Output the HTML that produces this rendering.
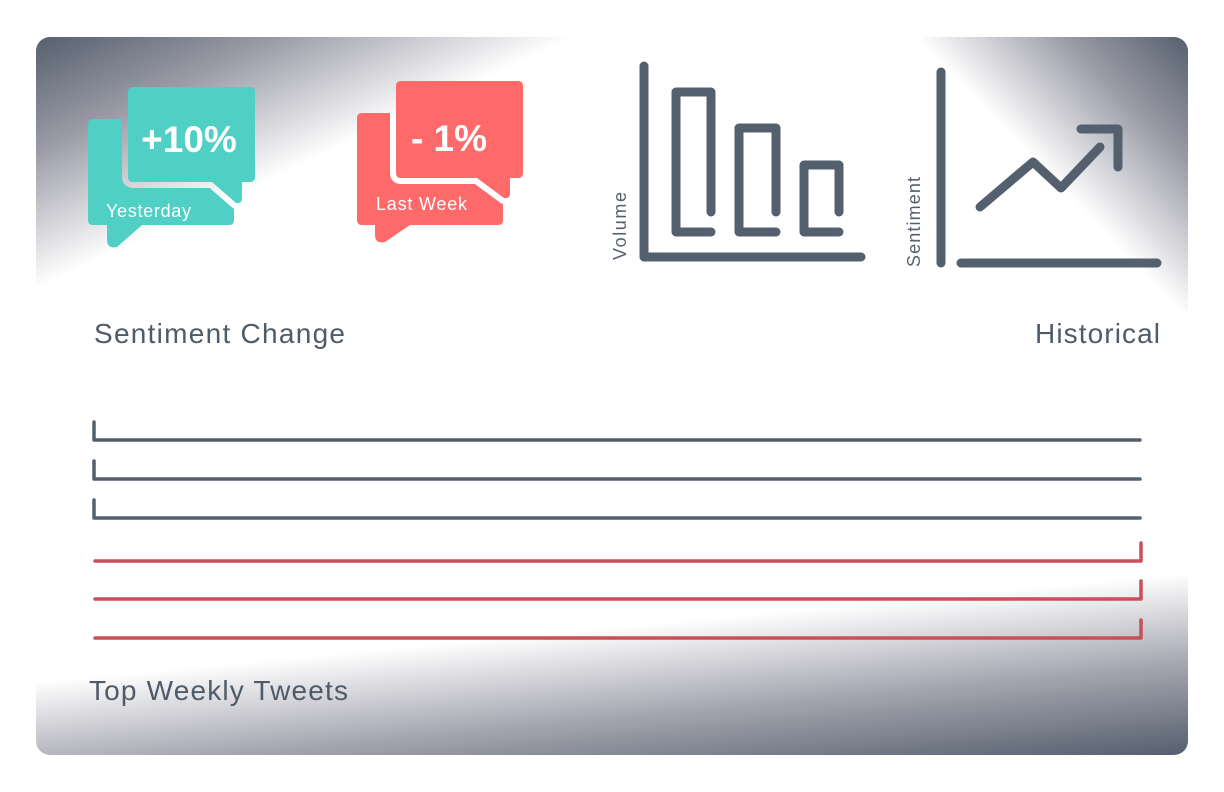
<!DOCTYPE html>
<html><head><meta charset="utf-8"><style>
html,body{margin:0;padding:0;background:#fff;width:1224px;height:792px;overflow:hidden}
svg{display:block}
text{font-family:"Liberation Sans",sans-serif}
</style></head><body>
<svg width="1224" height="792" viewBox="0 0 1224 792" xmlns="http://www.w3.org/2000/svg">
<defs>
<clipPath id="card"><rect x="36" y="37" width="1152" height="718" rx="14"/></clipPath>
<linearGradient id="gtl" gradientUnits="userSpaceOnUse" x1="36" y1="37" x2="133" y2="244">
<stop offset="0" stop-color="#56606e"/><stop offset="0.45" stop-color="#9a9ba6"/><stop offset="1" stop-color="#ffffff"/></linearGradient>
<linearGradient id="gtr" gradientUnits="userSpaceOnUse" x1="1188" y1="37" x2="1047" y2="173">
<stop offset="0" stop-color="#56606e"/><stop offset="0.45" stop-color="#9a9ba6"/><stop offset="1" stop-color="#ffffff"/></linearGradient>
<linearGradient id="gb" gradientUnits="userSpaceOnUse" x1="1188" y1="573" x2="1205" y2="753">
<stop offset="0" stop-color="#ffffff"/><stop offset="0.5" stop-color="#a4a5af"/><stop offset="1" stop-color="#56606e"/></linearGradient>
<mask id="m1" maskUnits="userSpaceOnUse" x="0" y="0" width="1224" height="792">
<rect width="1224" height="792" fill="#fff"/>
<path d="M133,87H250q5,0 5,5V177q0,5 -5,5H242V198q0,6 -6,5L212,182H133q-5,0 -5,-5V92q0,-5 5,-5Z" fill="#000" stroke="#000" stroke-width="12" stroke-linejoin="round"/>
</mask>
<mask id="m2" maskUnits="userSpaceOnUse" x="0" y="0" width="1224" height="792">
<rect width="1224" height="792" fill="#fff"/>
<path d="M401,81H518q5,0 5,5V173q0,5 -5,5H510V193q0,6 -6,5L477,178H401q-5,0 -5,-5V86q0,-5 5,-5Z" fill="#000" stroke="#000" stroke-width="12" stroke-linejoin="round"/>
</mask>
</defs>
<g clip-path="url(#card)">
<rect x="36" y="37" width="1152" height="718" fill="#fff"/>
<polygon points="36,37 575,37 36,290" fill="url(#gtl)"/>
<polygon points="915,37 1188,37 1188,320" fill="url(#gtr)"/>
<polygon points="36,680 1188,573 1188,755 36,755" fill="url(#gb)"/>
</g>
<path mask="url(#m1)" d="M93,119H229q5,0 5,5V220q0,5 -5,5H142L117,247q-10,2 -10,-7V225H93q-5,0 -5,-5V124q0,-5 5,-5Z" fill="#50cfc5"/>
<path d="M133,87H250q5,0 5,5V177q0,5 -5,5H242V198q0,6 -6,5L212,182H133q-5,0 -5,-5V92q0,-5 5,-5Z" fill="#50cfc5"/>
<text x="189" y="152" text-anchor="middle" font-size="37" font-weight="bold" fill="#fff">+10%</text>
<text x="106" y="217" font-size="18" fill="#fff" textLength="85">Yesterday</text>
<path mask="url(#m2)" d="M362,113H498q5,0 5,5V220q0,5 -5,5H410L385,242q-10,2 -10,-7V225H362q-5,0 -5,-5V118q0,-5 5,-5Z" fill="#fe6a6a"/>
<path d="M401,81H518q5,0 5,5V173q0,5 -5,5H510V193q0,6 -6,5L477,178H401q-5,0 -5,-5V86q0,-5 5,-5Z" fill="#fe6a6a"/>
<text x="449" y="151" text-anchor="middle" font-size="37" font-weight="bold" fill="#fff">- 1%</text>
<text x="376" y="210" font-size="18" fill="#fff" textLength="91">Last Week</text>
<g fill="none" stroke="#55606e" stroke-width="9" stroke-linecap="round" stroke-linejoin="round">
<path d="M644,66V257H861"/>
<path d="M711,212V92H676V232H711"/>
<path d="M776,212V128H739V232H776"/>
<path d="M839,212V165H804V232H839"/>
<path d="M941,72V263"/>
<path d="M961,263H1157"/>
<path d="M980,207L1033,162L1061,188L1100,147"/>
<path d="M1081,129H1118V167"/>
</g>
<text transform="translate(626,226) rotate(-90)" text-anchor="middle" font-size="18" fill="#55606e" textLength="68">Volume</text>
<text transform="translate(920,222) rotate(-90)" text-anchor="middle" font-size="18" fill="#55606e" textLength="90">Sentiment</text>
<text x="94" y="343" font-size="28" fill="#4f5b69" textLength="251">Sentiment Change</text>
<text x="1035" y="343" font-size="28" fill="#4f5b69" textLength="125">Historical</text>
<g fill="none" stroke="#55606e" stroke-width="3.5" stroke-linecap="round" stroke-linejoin="round">
<path d="M94,422V440H1140"/>
<path d="M94,461V479H1140"/>
<path d="M94,500V518H1140"/>
</g>
<g fill="none" stroke="#c94f59" stroke-width="3.5" stroke-linecap="round" stroke-linejoin="round">
<path d="M95,561H1141V543"/>
<path d="M95,599H1141V581"/>
<path d="M95,638H1141V620"/>
</g>
<text x="89" y="700" font-size="28" fill="#4f5b69" textLength="259">Top Weekly Tweets</text>
</svg>
</body></html>
